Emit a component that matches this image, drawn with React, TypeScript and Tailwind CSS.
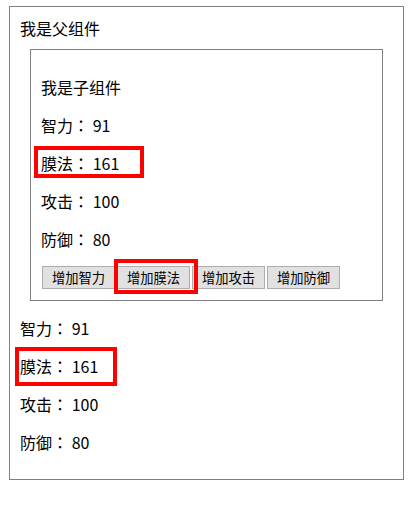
import React, { useState } from 'react'

interface Stats {
  zhili: number
  mofa: number
  gongji: number
  fangyu: number
}

// full-width colon with centred glyph, like the original font
const Colon = () => <span style={{ fontFamily: '"Noto Sans CJK TC", sans-serif' }}>：</span>

function StatList({ stats }: { stats: Stats }) {
  return (
    <>
      <p className="my-4 leading-[22px]">智力<Colon /> {stats.zhili}</p>
      <p className="my-4 leading-[22px]">膜法<Colon /> {stats.mofa}</p>
      <p className="my-4 leading-[22px]">攻击<Colon /> {stats.gongji}</p>
      <p className="my-4 leading-[22px]">防御<Colon /> {stats.fangyu}</p>
    </>
  )
}

function Child({ stats, onAdd }: { stats: Stats; onAdd: (key: keyof Stats) => void }) {
  const buttons: { label: string; key: keyof Stats }[] = [
    { label: '增加智力', key: 'zhili' },
    { label: '增加膜法', key: 'mofa' },
    { label: '增加攻击', key: 'gongji' },
    { label: '增加防御', key: 'fangyu' },
  ]

  return (
    <div className="mx-[10px] mt-[10px] w-[353px] border border-[#808080] px-[10px] pt-[10px] pb-[11px]">
      <p className="my-4 leading-[22px]">我是子组件</p>
      <StatList stats={stats} />
      <div className="flex gap-[2px] pl-px">
        {buttons.map((b) => (
          <button
            key={b.key}
            onClick={() => onAdd(b.key)}
            className="h-[23px] w-[73px] shrink-0 border border-[#adadad] bg-[#e1e1e1] text-[13.3px] leading-none text-black"
          >
            {b.label}
          </button>
        ))}
      </div>
    </div>
  )
}

export default function App() {
  const [stats, setStats] = useState<Stats>({ zhili: 91, mofa: 161, gongji: 100, fangyu: 80 })

  const handleAdd = (key: keyof Stats) => {
    setStats((prev) => ({ ...prev, [key]: prev[key] + 1 }))
  }

  return (
    <div
      className="relative h-[505px] w-[415px] bg-white text-[16px] text-black"
      style={{ fontFamily: '"Noto Sans CJK SC", "Noto Sans", sans-serif' }}
    >
      <div className="pl-[9px] pt-[6px]">
        <div className="w-[395px] border border-[#808080] px-[10px] pt-[10px] pb-[10px]">
          <div className="leading-[22px]">我是父组件</div>
          <Child stats={stats} onAdd={handleAdd} />
          <StatList stats={stats} />
        </div>
      </div>

      {/* red annotation boxes */}
      <div className="pointer-events-none absolute left-[34px] top-[146px] h-[32px] w-[110px] border-4 border-[#ff0000]" />
      <div className="pointer-events-none absolute left-[114px] top-[259px] h-[35px] w-[84px] border-4 border-[#ff0000]" />
      <div className="pointer-events-none absolute left-[15px] top-[347px] h-[39px] w-[102px] border-4 border-[#ff0000]" />
    </div>
  )
}
